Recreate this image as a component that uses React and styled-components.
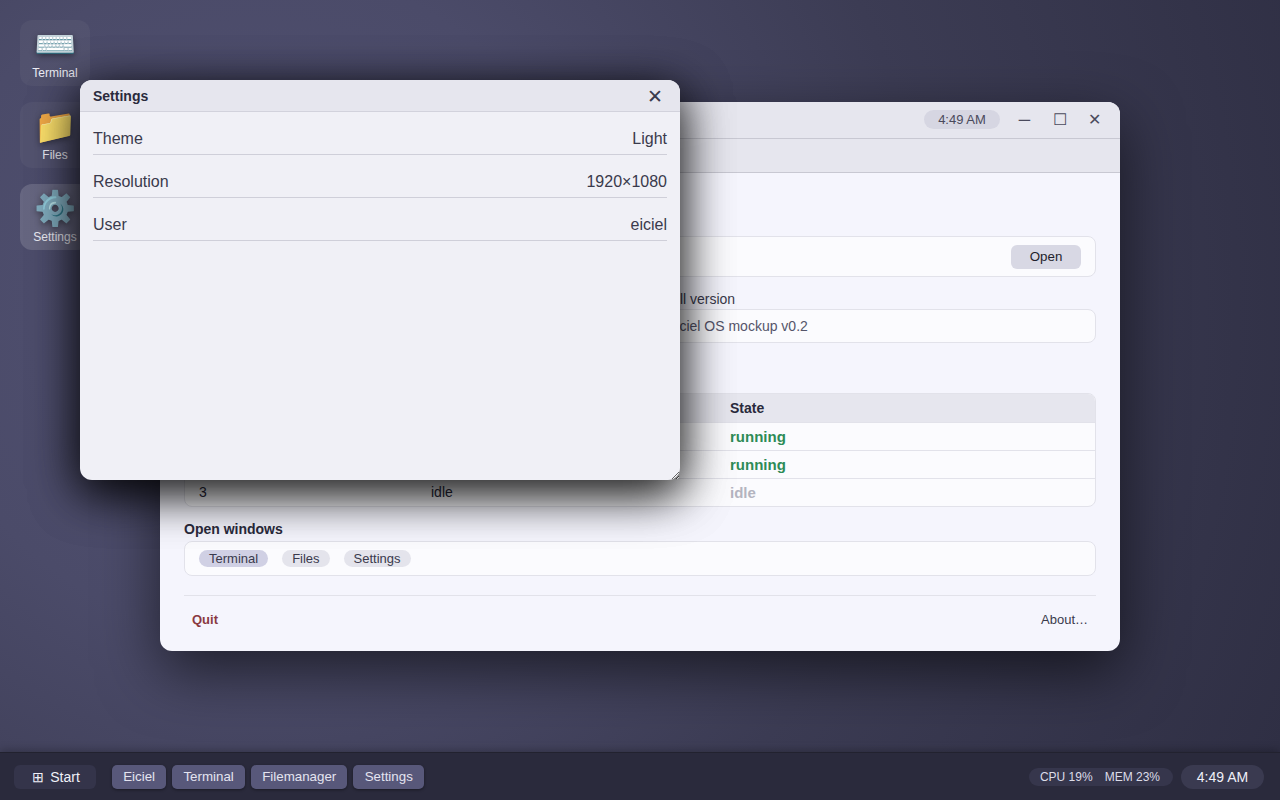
import React from "react";
import styled, { createGlobalStyle } from "styled-components";

const Global = createGlobalStyle`
  html, body, #root { margin: 0; height: 100%; }
  body { font-family: "Liberation Sans", Arial, sans-serif; overflow: hidden; }
  * { box-sizing: border-box; }
`;

const Screen = styled.div`
  width: 1280px;
  height: 800px;
  display: flex;
  flex-direction: column;
  overflow: hidden;
`;

const Desktop = styled.div`
  position: relative;
  flex: 1;
  padding: 20px;
  background: radial-gradient(circle at 20% 40%, #515172 0%, #4b4b69 30%, #3c3c54 60%, #2f2f44 100%);
`;

const IconColumn = styled.div`
  display: flex;
  flex-direction: column;
  gap: 16px;
  width: 70px;
`;

const DesktopIcon = styled.div`
  height: 66px;
  border-radius: 12px;
  display: flex;
  flex-direction: column;
  align-items: center;
  background: ${(p) => (p.$selected ? "rgba(255,255,255,0.15)" : "rgba(255,255,255,0.04)")};
`;

const Glyph = styled.div`
  height: 46px;
  font-size: 34px;
  line-height: 49px;
  text-align: center;
  filter: drop-shadow(0 2px 3px rgba(0, 0, 0, 0.4));
`;

const IconLabel = styled.div`
  font-size: 12px;
  line-height: 14px;
  color: #eeeef6;
`;

const Window = styled.div`
  position: absolute;
  left: ${(p) => p.$x}px;
  top: ${(p) => p.$y}px;
  width: ${(p) => p.$w}px;
  height: ${(p) => p.$h}px;
  border-radius: 12px;
  background: #f5f5fd;
  box-shadow: 0 20px 60px rgba(0, 0, 0, 0.6);
  display: flex;
  flex-direction: column;
  overflow: hidden;
`;

const SettingsWindow = styled(Window)`
  background: #f0f0f6;
  box-shadow: 0 12px 48px rgba(0, 0, 0, 0.8), 0 12px 48px rgba(0, 0, 0, 0.5);
  resize: both;
`;

const TitleBar = styled.div`
  height: 37px;
  flex: none;
  display: flex;
  align-items: center;
  padding: 0 8px 0 24px;
  background: #e6e6ee;
  border-bottom: 1px solid #c8c8d2;
`;

const AppTitle = styled.div`
  flex: 1;
  font-size: 14px;
  font-weight: 700;
  color: #2a2a3c;
`;

const TimePill = styled.div`
  width: 76px;
  height: 19px;
  margin: 0 7px 1px 0;
  border-radius: 10px;
  background: #d6d6e2;
  color: #4a4a5c;
  font-size: 13px;
  line-height: 19px;
  text-align: center;
`;

const WinButton = styled.button`
  width: 35px;
  height: 28px;
  padding: 0;
  border: 0;
  background: none;
  color: #4a4a5c;
  font-family: inherit;
  font-size: 16px;
  line-height: 28px;
`;

const TabBar = styled.div`
  height: 34px;
  flex: none;
  display: flex;
  align-items: flex-end;
  gap: 4px;
  padding: 0 24px;
  background: #e6e6ee;
  border-bottom: 1px solid #c8c8d2;
`;

const Tab = styled.div`
  padding: 8px 14px;
  font-size: 13px;
  color: #3a3a4c;
`;

const Body = styled.div`
  flex: 1;
  padding: 20px 24px 0;
  display: flex;
  flex-direction: column;
`;

const Heading = styled.div`
  height: 43px;
  font-size: 18px;
  font-weight: 700;
  color: #2a2a3c;
`;

const Card = styled.div`
  display: flex;
  align-items: center;
  background: #fbfbfe;
  border: 1px solid #e2e2ea;
  border-radius: 8px;
`;

const LauncherCard = styled(Card)`
  height: 41px;
  justify-content: space-between;
  padding: 0 14px;
  font-size: 14px;
  color: #2a2a3c;
`;

const OpenButton = styled.button`
  width: 70px;
  height: 24px;
  padding: 0;
  border: 0;
  border-radius: 6px;
  background: #d8d8e4;
  color: #1f1f2c;
  font-family: inherit;
  font-size: 13.33px;
`;

const FieldGrid = styled.div`
  display: grid;
  grid-template-columns: 1fr 1fr;
  gap: 30px;
  margin-top: 14px;
`;

const FieldLabel = styled.div`
  height: 18px;
  font-size: 14px;
  line-height: 16px;
  color: #3a3a4c;
`;

const FieldValue = styled(Card)`
  height: 34px;
  padding: 0 11px;
  font-size: 14px;
  color: #55556a;
`;

const SectionTitle = styled.div`
  font-size: 14px;
  line-height: 16px;
  font-weight: 700;
  color: #2a2a3c;
  margin: ${(p) => p.$top}px 0 ${(p) => p.$bottom}px;
`;

const Table = styled.div`
  border: 1px solid #e2e2ea;
  border-radius: 8px;
  overflow: hidden;
  background: #fbfbfe;
`;

const Row = styled.div`
  display: grid;
  grid-template-columns: 232px 299px 1fr;
  height: ${(p) => (p.$head ? 29 : 28)}px;
  align-items: center;
  padding-left: 14px;
  font-size: 14px;
  color: #2a2a3c;
  background: ${(p) => (p.$head ? "#e6e6ee" : "transparent")};
  font-weight: ${(p) => (p.$head ? 700 : 400)};
  border-bottom: 1px solid #e2e2ea;
  &:last-child {
    height: 27px;
    padding-bottom: 1px;
    border-bottom: 0;
  }
`;

const State = styled.span`
  font-size: 15px;
  font-weight: 700;
  color: ${(p) => (p.$idle ? "#b4b4c0" : "#2e8b57")};
`;

const ChipCard = styled(Card)`
  height: 35px;
  gap: 14px;
  padding: 0 14px;
`;

const Chip = styled.span`
  height: 17px;
  padding: 0 10px;
  border-radius: 9px;
  background: ${(p) => (p.$active ? "#d0d0e4" : "#e4e4ec")};
  color: #3a3a4c;
  font-size: 13px;
  line-height: 17px;
`;

const Footer = styled.div`
  display: flex;
  justify-content: space-between;
  align-items: center;
  margin-top: 19px;
  padding: 16px 8px 0;
  border-top: 1px solid #e2e2ea;
  font-size: 13px;
  color: #3a3a4c;
`;

const Quit = styled.span`
  font-weight: 700;
  color: #8a3a42;
`;

const SettingsBar = styled(TitleBar)`
  height: 32px;
  padding: 0 17px 0 13px;
  border-bottom-color: #d2d2dc;
`;

const CloseGlyph = styled.span`
  font-family: "DejaVu Sans", sans-serif;
  font-size: 19px;
  color: #3a3a4c;
`;

const SettingsBody = styled.div`
  padding: 0 13px;
`;

const SettingRow = styled.div`
  height: 43px;
  padding-top: 18px;
  display: flex;
  justify-content: space-between;
  font-size: 16px;
  line-height: 18px;
  color: #3a3a4c;
  border-bottom: 1px solid #cfcfd9;
`;

const Taskbar = styled.div`
  height: 48px;
  flex: none;
  display: flex;
  align-items: center;
  padding: 0 16px 0 14px;
  background: #2a2a3c;
  border-top: 1px solid #22222f;
  box-shadow: 0 -2px 8px rgba(0, 0, 0, 0.25);
  z-index: 2;
`;

const StartButton = styled.div`
  width: 82px;
  height: 24px;
  margin-right: 16px;
  padding-left: 2px;
  display: flex;
  align-items: center;
  justify-content: center;
  gap: 6px;
  border-radius: 6px;
  background: #34344a;
  color: #f0f0f8;
  font-size: 14px;
`;

const TaskButton = styled.div`
  height: 24px;
  margin-right: 6px;
  padding: 0 11.2px;
  border-radius: 5px;
  background: #58587a;
  box-shadow: 0 1px 3px rgba(0, 0, 0, 0.4);
  color: #e4e4f0;
  font-size: 13.33px;
  line-height: 24px;
`;

const Tray = styled.div`
  margin-left: auto;
  display: flex;
  align-items: center;
  gap: 8px;
`;

const Stats = styled.div`
  display: flex;
  gap: 12px;
  height: 18px;
  padding: 0 13px 0 11px;
  border-radius: 9px;
  background: #36364c;
  color: #dcdce8;
  font-size: 12px;
  line-height: 18px;
`;

const Clock = styled.div`
  width: 83px;
  height: 24px;
  border-radius: 12px;
  background: #3a3a50;
  color: #f0f0f8;
  font-size: 14px;
  line-height: 24px;
  text-align: center;
`;

const desktopIcons = [
  { glyph: "⌨️", name: "Terminal" },
  { glyph: "📁", name: "Files" },
  { glyph: "⚙️", name: "Settings", selected: true },
];

const processes = [
  { pid: 1, name: "terminal", state: "running" },
  { pid: 2, name: "filemanager", state: "running" },
  { pid: 3, name: "idle", state: "idle" },
];

const settings = [
  ["Theme", "Light"],
  ["Resolution", "1920×1080"],
  ["User", "eiciel"],
];

export default function App() {
  return (
    <Screen>
      <Global />
      <Desktop>
        <IconColumn>
          {desktopIcons.map((icon) => (
            <DesktopIcon key={icon.name} $selected={icon.selected}>
              <Glyph>{icon.glyph}</Glyph>
              <IconLabel>{icon.name}</IconLabel>
            </DesktopIcon>
          ))}
        </IconColumn>

        <Window $x={160} $y={102} $w={960} $h={549}>
          <TitleBar>
            <AppTitle>Eiciel</AppTitle>
            <TimePill>4:49 AM</TimePill>
            <WinButton>─</WinButton>
            <WinButton>☐</WinButton>
            <WinButton>✕</WinButton>
          </TitleBar>
          <TabBar>
            <Tab>Overview</Tab>
            <Tab>Apps</Tab>
          </TabBar>
          <Body>
            <Heading>Welcome</Heading>
            <LauncherCard>
              <span>Terminal</span>
              <OpenButton>Open</OpenButton>
            </LauncherCard>
            <FieldGrid>
              <div>
                <FieldLabel>Hostname</FieldLabel>
                <FieldValue>eiciel</FieldValue>
              </div>
              <div>
                <FieldLabel>Shell version</FieldLabel>
                <FieldValue>Eiciel OS mockup v0.2</FieldValue>
              </div>
            </FieldGrid>
            <SectionTitle $top={27} $bottom={7}>Processes</SectionTitle>
            <Table>
              <Row $head><span>PID</span><span>Name</span><span>State</span></Row>
              {processes.map((p) => (
                <Row key={p.pid}>
                  <span>{p.pid}</span>
                  <span>{p.name}</span>
                  <State $idle={p.state === "idle"}>{p.state}</State>
                </Row>
              ))}
            </Table>
            <SectionTitle $top={14} $bottom={4}>Open windows</SectionTitle>
            <ChipCard>
              <Chip $active>Terminal</Chip>
              <Chip>Files</Chip>
              <Chip>Settings</Chip>
            </ChipCard>
            <Footer>
              <Quit>Quit</Quit>
              <span>About…</span>
            </Footer>
          </Body>
        </Window>

        <SettingsWindow $x={80} $y={80} $w={600} $h={400}>
          <SettingsBar>
            <AppTitle>Settings</AppTitle>
            <CloseGlyph>✕</CloseGlyph>
          </SettingsBar>
          <SettingsBody>
            {settings.map(([key, value]) => (
              <SettingRow key={key}>
                <span>{key}</span>
                <span>{value}</span>
              </SettingRow>
            ))}
          </SettingsBody>
        </SettingsWindow>
      </Desktop>

      <Taskbar>
        <StartButton><span>⊞</span><span>Start</span></StartButton>
        <TaskButton>Eiciel</TaskButton>
        <TaskButton>Terminal</TaskButton>
        <TaskButton>Filemanager</TaskButton>
        <TaskButton>Settings</TaskButton>
        <Tray>
          <Stats><span>CPU 19%</span><span>MEM 23%</span></Stats>
          <Clock>4:49 AM</Clock>
        </Tray>
      </Taskbar>
    </Screen>
  );
}
